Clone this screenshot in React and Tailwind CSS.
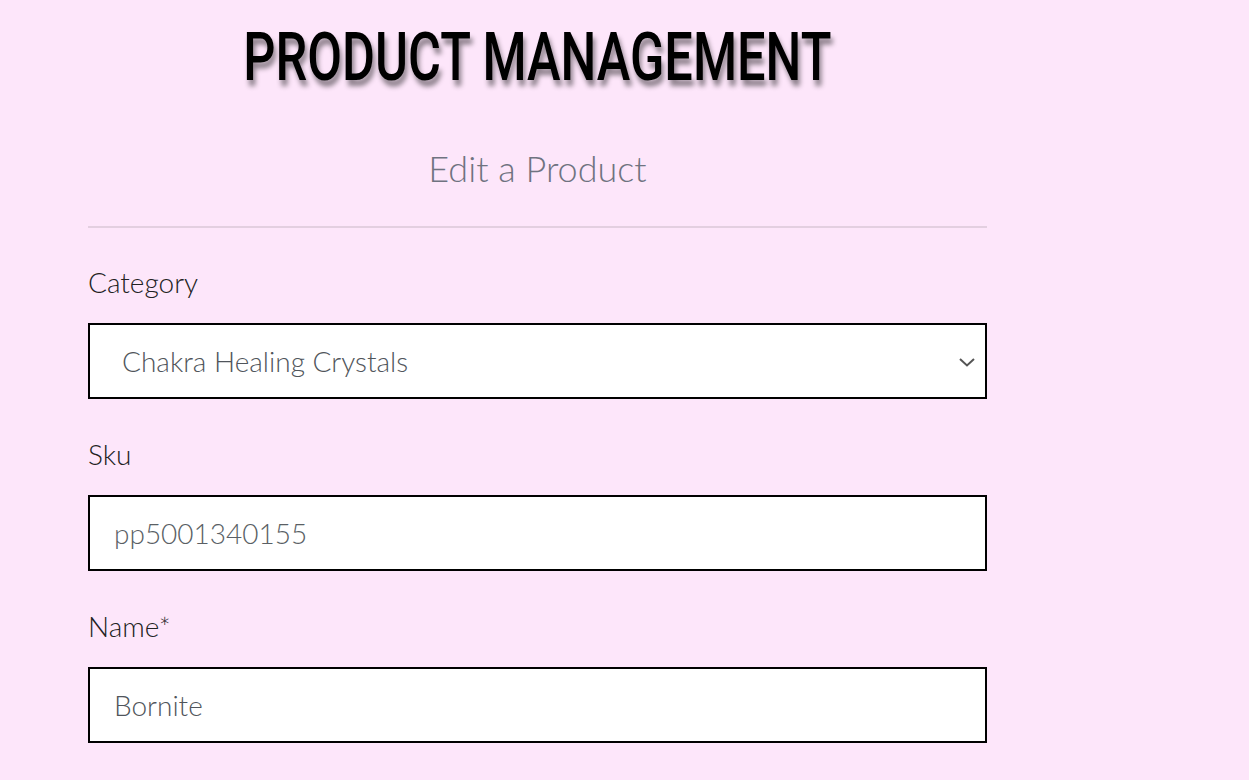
import React from "react";

const Field = ({ label, children }) => (
    <div className="flex flex-col">
        <label className="text-[28px] leading-[40px] text-[#222] mb-[21px]">{label}</label>
        {children}
    </div>
);

export default function App() {
    return (
        <div className="min-h-screen w-full bg-[#fde6fa] font-['Lato',sans-serif] font-light">
            <div className="w-[899px] ml-[88px] flex flex-col">
                <div className="flex justify-center pt-[20px]">
                    <h1 className="inline-block scale-x-[0.765] whitespace-nowrap text-[66px] leading-[76px] font-medium text-black font-['Roboto',sans-serif] [text-shadow:3px_6px_6px_rgba(0,0,0,0.45)]">
                        PRODUCT MANAGEMENT
                    </h1>
                </div>
                <h2 className="text-center text-[36px] leading-[50px] mt-[47px] text-[#6f7380]">Edit a Product</h2>
                <hr className="border-0 border-t-2 border-[#e3cfe0] mt-[33px]" />
                <div className="flex flex-col gap-[35px] mt-[34px]">
                    <Field label="Category">
                        <div className="relative h-[76px] bg-white border-2 border-black flex items-center">
                            <span className="pl-[32px] text-[28px] text-[#50555b]">Chakra Healing Crystals</span>
                            <svg className="absolute right-[9px] top-[31px]" width="18" height="12" viewBox="0 0 18 12" fill="none">
                                <path d="M2 3 L9 9.5 L16 3" stroke="#555" strokeWidth="2" />
                            </svg>
                        </div>
                    </Field>
                    <Field label="Sku">
                        <div className="h-[76px] bg-white border-2 border-black flex items-center">
                            <span className="pl-[24px] text-[28px] text-[#5a5f65]">pp5001340155</span>
                        </div>
                    </Field>
                    <Field label="Name*">
                        <div className="h-[76px] bg-white border-2 border-black flex items-center">
                            <span className="pl-[24px] text-[28px] text-[#50555b]">Bornite</span>
                        </div>
                    </Field>
                </div>
            </div>
        </div>
    );
}
